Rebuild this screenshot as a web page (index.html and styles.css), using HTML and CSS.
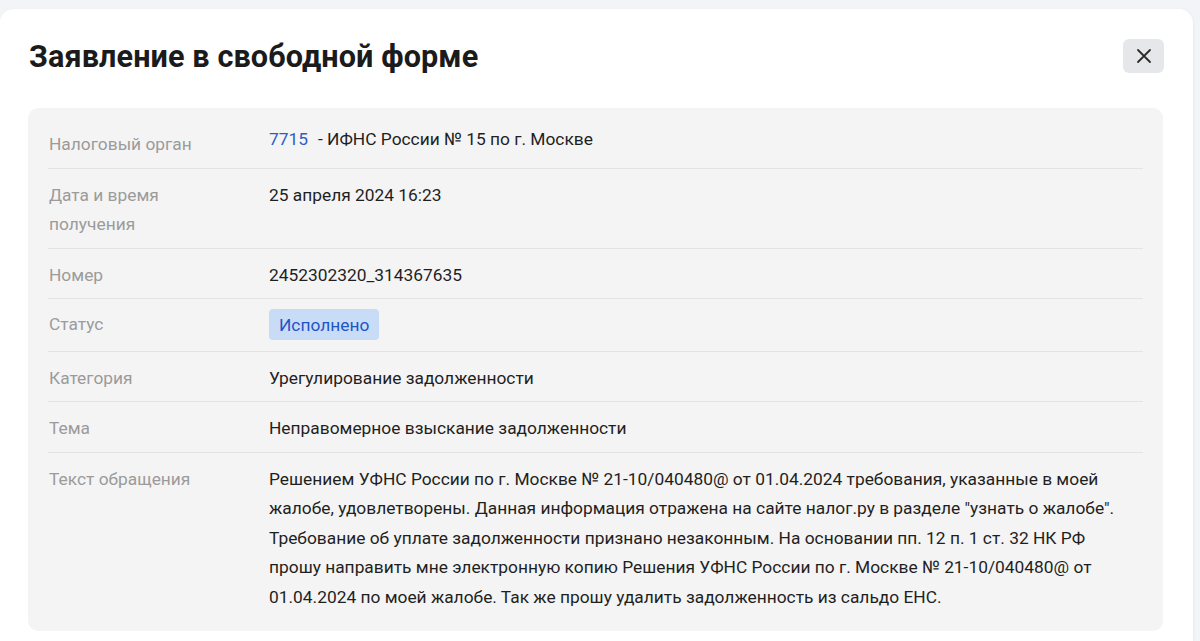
FILE: index.html
```html
<!DOCTYPE html>
<html lang="ru">
<head>
  <meta charset="UTF-8" />
  <meta name="viewport" content="width=device-width, initial-scale=1.0" />
  <title>Заявление в свободной форме</title>
  <link rel="stylesheet" href="styles.css">
</head>
<body>
  <div class="modal">
    <div class="modal-header">
      <h1 class="modal-title">Заявление в свободной форме</h1>
      <button class="close-btn" aria-label="Закрыть">
        <svg width="16" height="16" viewBox="0 0 16 16">
          <path d="M2 2 L14 14 M14 2 L2 14" stroke="#2b2b2b" stroke-width="1.8" stroke-linecap="round" />
        </svg>
      </button>
    </div>

    <div class="details">
      <div class="row row-first">
        <div class="label">Налоговый орган</div>
        <div class="value"><a class="code" href="#">7715</a>- ИФНС России № 15 по г. Москве</div>
      </div>
      <div class="row">
        <div class="label">Дата и время<br>получения</div>
        <div class="value">25 апреля 2024 16:23</div>
      </div>
      <div class="row">
        <div class="label">Номер</div>
        <div class="value">2452302320_314367635</div>
      </div>
      <div class="row row-status">
        <div class="label">Статус</div>
        <div class="value"><span class="badge">Исполнено</span></div>
      </div>
      <div class="row">
        <div class="label">Категория</div>
        <div class="value">Урегулирование задолженности</div>
      </div>
      <div class="row">
        <div class="label">Тема</div>
        <div class="value">Неправомерное взыскание задолженности</div>
      </div>
      <div class="row">
        <div class="label">Текст обращения</div>
        <div class="value">Решением УФНС России по г. Москве № 21-10/040480@ от 01.04.2024 требования, указанные в моей жалобе, удовлетворены. Данная информация отражена на сайте налог.ру в разделе "узнать о жалобе". Требование об уплате задолженности признано незаконным. На основании пп. 12 п. 1 ст. 32 НК РФ прошу направить мне электронную копию Решения УФНС России по г. Москве № 21-10/040480@ от 01.04.2024 по моей жалобе. Так же прошу удалить задолженность из сальдо ЕНС.</div>
      </div>
    </div>
  </div>
</body>
</html>
```

FILE: styles.css
```css
body {
  margin: 0;
  background: #f3f4f7;
  font-family: Roboto, "Noto Sans", sans-serif;
  color: #1f1f1f;
  overflow: hidden;
}

.modal {
  width: 1193px;
  height: calc(100vh - 9px);
  margin-top: 9px;
  background: #fff;
  border-radius: 14px 14px 0 0;
  box-shadow: 1px 0 2px rgba(0, 0, 0, 0.04);
  box-sizing: border-box;
  padding: 0 29px 0 28px;
  overflow: hidden;
}

.modal-header {
  display: flex;
  justify-content: space-between;
  align-items: flex-start;
  padding-top: 30px;
  height: 99px;
  box-sizing: border-box;
}

.modal-title {
  margin: 0 0 0 1px;
  font-size: 30.6px;
  font-weight: 700;
  line-height: 36px;
  color: #1b1b1b;
  letter-spacing: 0.1px;
}

.close-btn {
  width: 41px;
  height: 34px;
  border: none;
  border-radius: 6px;
  background: #e6e7ea;
  display: flex;
  align-items: center;
  justify-content: center;
  padding: 0;
}

.details {
  background: #f4f4f4;
  border-radius: 10px;
  padding: 10px 20px 11px;
  width: 1135px;
  box-sizing: border-box;
}

.row {
  display: grid;
  grid-template-columns: 221px 1fr;
  padding: 12px 0 8px;
  border-bottom: 1px solid #e3e3e3;
  font-size: 17.35px;
  line-height: 29.5px;
}

.row:last-child {
  border-bottom: none;
}

.row-first .value {
  margin-top: -5px;
}

.row-status {
  align-items: center;
  padding: 10px 0;
}

.label {
  color: #9b9b9b;
  padding-left: 1px;
}

.value {
  color: #1f1f1f;
  padding-right: 16px;
}

.code {
  color: #2a5ec6;
  text-decoration: none;
  margin-right: 10px;
}

.badge {
  display: inline-block;
  background: #c9dcf7;
  color: #1f55c6;
  border-radius: 4px;
  padding: 1px 10px 0;
  line-height: 30px;
}
```
